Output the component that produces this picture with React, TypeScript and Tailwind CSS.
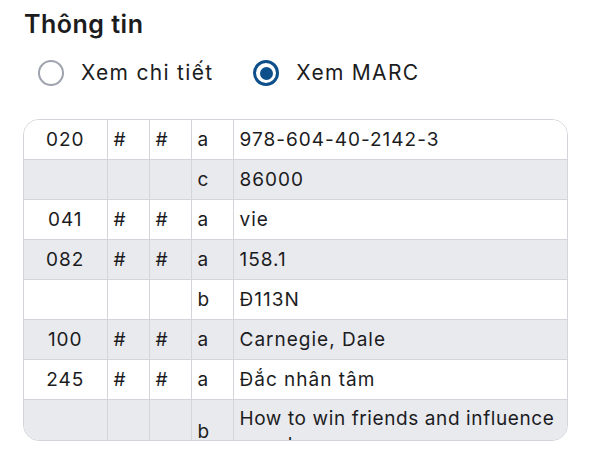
import React from "react";

type Row = { tag: string; i1: string; i2: string; code: string; value: string };

const rows: Row[] = [
  { tag: "020", i1: "#", i2: "#", code: "a", value: "978-604-40-2142-3" },
  { tag: "", i1: "", i2: "", code: "c", value: "86000" },
  { tag: "041", i1: "#", i2: "#", code: "a", value: "vie" },
  { tag: "082", i1: "#", i2: "#", code: "a", value: "158.1" },
  { tag: "", i1: "", i2: "", code: "b", value: "Đ113N" },
  { tag: "100", i1: "#", i2: "#", code: "a", value: "Carnegie, Dale" },
  { tag: "245", i1: "#", i2: "#", code: "a", value: "Đắc nhân tâm" },
  { tag: "", i1: "", i2: "", code: "b", value: "How to win friends and influence people" },
];

const base = "border-b border-[#d3d5db] align-middle";

export default function App() {
  return (
    <div
      className="w-[590px] h-[469px] bg-white text-[#1c1c1e] overflow-hidden"
      style={{ fontFamily: "Inter, 'Noto Sans', sans-serif" }}
    >
      <div className="pl-[24px] pt-[7px]">
        <h1 className="text-[25px] leading-[34px] font-semibold tracking-[0.5px]">Thông tin</h1>
        <div className="flex items-center mt-[18px] h-[28px]">
          <div className="flex items-center ml-[14px]">
            <span className="w-[26px] h-[26px] rounded-full border-[2.5px] border-[#9ea3ad] bg-white" />
            <span className="ml-[17px] text-[21px] leading-[28px] tracking-[1.3px]">Xem chi tiết</span>
          </div>
          <div className="flex items-center ml-[40px]">
            <span className="w-[26px] h-[26px] rounded-full border-[3px] border-[#0d4f8b] bg-white flex items-center justify-center">
              <span className="w-[13px] h-[13px] rounded-full bg-[#0d4f8b]" />
            </span>
            <span className="ml-[17px] text-[21px] leading-[28px] tracking-[1.3px]">Xem MARC</span>
          </div>
        </div>
      </div>
      <div className="ml-[23px] mt-[32px] w-[545px] h-[322px] overflow-hidden rounded-[16px] border border-[#d3d5db]">
        <table className="w-full table-fixed border-collapse text-[19px] tracking-[1px]">
          <colgroup>
            <col className="w-[83px]" />
            <col className="w-[42px]" />
            <col className="w-[42px]" />
            <col className="w-[42px]" />
            <col />
          </colgroup>
          <tbody>
            {rows.map((r, idx) => {
              const last = idx === rows.length - 1;
              const cell = `${base} ${last ? "leading-[26px] py-[6px]" : "leading-[23px] py-[8px]"}`;
              return (
                <tr key={idx} className={idx % 2 === 1 ? "bg-[#e9eaee]" : "bg-white"}>
                  <td className={`${cell} text-center border-r`}>{r.tag}</td>
                  <td className={`${cell} pl-[6px] border-r`}>{r.i1}</td>
                  <td className={`${cell} pl-[6px] border-r`}>{r.i2}</td>
                  <td className={`${cell} pl-[6px] border-r`}>{r.code}</td>
                  <td className={`${cell} pl-[6px] pr-0 ${last ? "tracking-[0.6px]" : ""}`}>{r.value}</td>
                </tr>
              );
            })}
          </tbody>
        </table>
      </div>
    </div>
  );
}
